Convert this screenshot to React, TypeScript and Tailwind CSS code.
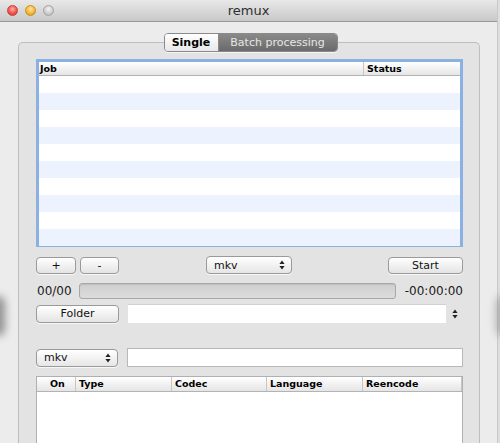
import React from "react";

// remux — batch processing window (mac aqua style)

const Arrows = ({ className = "" }: { className?: string }) => (
  <svg width="6" height="10" viewBox="0 0 6 10" className={className}>
    <path d="M3 0.5 L5.6 4 L0.4 4 Z" fill="#222" />
    <path d="M3 9.5 L5.6 6 L0.4 6 Z" fill="#222" />
  </svg>
);

const Button = ({ label, className = "" }: { label: string; className?: string }) => (
  <div
    className={`flex items-center justify-center h-[17px] rounded-[4px] border border-[#9a9a9a] bg-gradient-to-b from-white to-[#e4e4e4] text-[11px] leading-none text-[#111] shadow-[0_1px_0_rgba(255,255,255,0.7)] ${className}`}
  >
    {label}
  </div>
);

const Popup = ({ className = "" }: { className?: string }) => (
  <div
    className={`flex items-center justify-between h-[18px] pl-[7px] pr-[6px] rounded-[4px] border border-[#9a9a9a] bg-gradient-to-b from-white to-[#e6e6e6] text-[11px] leading-none text-[#111] shadow-[0_1px_0_rgba(255,255,255,0.7)] ${className}`}
  >
    <span>mkv</span>
    <Arrows />
  </div>
);

const jobRows = Array.from({ length: 10 }, (_, i) => i);

export default function App() {
  return (
    <div className="relative w-[500px] h-[443px] overflow-hidden bg-[#dedede] font-['DejaVu_Sans',sans-serif]">
      <div className="flex flex-col w-[498px] h-full bg-[#ececec] border-r border-[#c9c9c9]">
        {/* title bar */}
        <div className="relative flex items-center justify-center h-[22px] shrink-0 bg-gradient-to-b from-[#e8e8e8] to-[#c9c9c9] border-b border-[#979797]">
          <div className="absolute left-[7px] top-[5px] flex gap-[7px]">
            <span className="w-[11px] h-[11px] rounded-full border border-[#c2433c] bg-[radial-gradient(circle_at_50%_35%,#ffb0a8,#f0554d_55%,#c9342c)]" />
            <span className="w-[11px] h-[11px] rounded-full border border-[#c7901f] bg-[radial-gradient(circle_at_50%_35%,#ffe6a0,#f5b83a_55%,#d0901a)]" />
            <span className="w-[11px] h-[11px] rounded-full border border-[#a3a3a3] bg-[radial-gradient(circle_at_50%_35%,#f4f4f4,#cfcfcf_55%,#b0b0b0)]" />
          </div>
          <span className="text-[13px] text-[#2e2e2e] leading-none">remux</span>
        </div>

        {/* body */}
        <div className="flex flex-col flex-1 min-h-0 pl-[18px] pr-[17px] pt-[11px]">
          {/* tabs */}
          <div className="relative z-10 flex justify-center">
            <div className="flex h-[19px] ml-[3px] rounded-[4px] border border-[#8a8a8a] overflow-hidden shadow-[0_1px_0_rgba(255,255,255,0.6)] text-[11px] leading-none">
              <div className="flex items-center justify-center w-[54px] bg-gradient-to-b from-white to-[#e8e8e8] text-black font-semibold border-r border-[#8a8a8a]">
                Single
              </div>
              <div className="flex items-center justify-center w-[118px] bg-gradient-to-b from-[#8a8a8a] to-[#6a6a6a] text-[#e6e6e6]">
                Batch processing
              </div>
            </div>
          </div>

          {/* tab box */}
          <div className="flex flex-col flex-1 min-h-0 -mt-[10px] rounded-t-[5px] border border-b-0 border-[#bdbdbd] bg-[#e3e3e3] pt-[16px] pl-[17px] pr-[16px]">
            {/* job table */}
            <div className="flex flex-col h-[188px] shrink-0 border-[3px] border-[#8bb0e2] bg-white">
              <div className="flex h-[14px] shrink-0 bg-gradient-to-b from-white to-[#e5e5e5] border-b border-[#b3b3b3] text-[9.5px] leading-none text-black font-semibold">
                <div className="flex items-center w-[325px] pl-[1px] border-r border-[#c6c6c6]">Job</div>
                <div className="flex items-center pl-[3px]">Status</div>
              </div>
              {jobRows.map((i) => (
                <div key={i} className={`h-[17px] shrink-0 ${i % 2 === 1 ? "bg-[#edf3fe]" : "bg-white"}`} />
              ))}
            </div>

            {/* +/- popup start */}
            <div className="flex items-center mt-[9px] h-[18px] shrink-0">
              <Button label="+" className="w-[40px]" />
              <Button label="-" className="w-[39px] ml-[4px]" />
              <Popup className="w-[86px] ml-[87px] h-[17px]" />
              <Button label="Start" className="w-[75px] ml-auto" />
            </div>

            {/* progress */}
            <div className="flex items-center mt-[9px] h-[16px] shrink-0">
              <span className="w-[43px] pl-[1px] text-[12px] leading-none text-[#1a1a1a]">00/00</span>
              <div className="w-[317px] h-[16px] rounded-[3px] border border-[#a8a8a8] bg-gradient-to-b from-[#cfcfcf] to-[#dcdcdc] shadow-[inset_0_1px_1px_rgba(0,0,0,0.08)]" />
              <span className="ml-auto text-[12px] leading-none text-[#1a1a1a]">-00:00:00</span>
            </div>

            {/* folder */}
            <div className="flex items-center mt-[5px] h-[19px] shrink-0">
              <Button label="Folder" className="w-[83px] h-[18px] rounded-[2px]" />
              <div className="w-[318px] h-[19px] ml-[9px] bg-white border-t border-[#d0d0d0]" />
              <Arrows className="ml-[6px]" />
            </div>

            {/* format + path */}
            <div className="flex items-center mt-[25px] h-[19px] shrink-0">
              <Popup className="w-[82px]" />
              <div className="flex-1 h-[19px] ml-[9px] bg-white border border-[#b8b8b8]" />
            </div>

            {/* tracks table */}
            <div className="flex flex-col flex-1 mt-[9px] border border-[#b0b0b0] border-b-0 bg-white">
              <div className="flex h-[15px] shrink-0 bg-gradient-to-b from-white to-[#e5e5e5] border-b border-[#b3b3b3] text-[9.5px] leading-none text-black font-semibold">
                <div className="flex items-center w-[39px] pl-[13px] border-r border-[#c6c6c6]">On</div>
                <div className="flex items-center w-[96px] pl-[3px] border-r border-[#c6c6c6]">Type</div>
                <div className="flex items-center w-[95px] pl-[3px] border-r border-[#c6c6c6]">Codec</div>
                <div className="flex items-center w-[96px] pl-[3px] border-r border-[#c6c6c6]">Language</div>
                <div className="flex items-center flex-1 pl-[3px] border-r border-[#c6c6c6]">Reencode</div>
              </div>
            </div>
          </div>
        </div>
      </div>

      {/* soft shadows of something behind the window */}
      <div className="absolute -left-[9px] top-[296px] w-[14px] h-[40px] rounded-full bg-[#6a6a6a] opacity-70 blur-[4px]" />
      <div className="absolute -right-[10px] top-[296px] w-[14px] h-[40px] rounded-full bg-[#8a8a8a] opacity-60 blur-[4px]" />
    </div>
  );
}
